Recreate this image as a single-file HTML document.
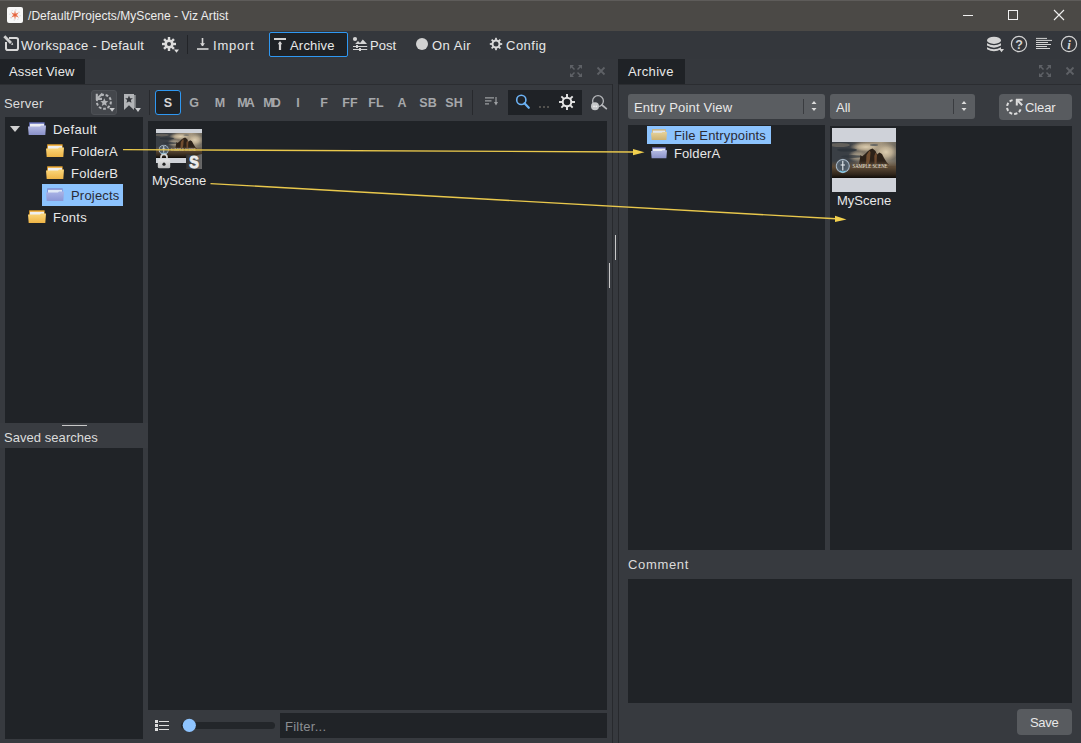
<!DOCTYPE html>
<html><head><meta charset="utf-8">
<style>
*{box-sizing:border-box;margin:0;padding:0}
html,body{width:1081px;height:743px;overflow:hidden;background:#373a3f;font-family:"Liberation Sans",sans-serif;font-size:13px;color:#e8e8e8}
.a{position:absolute}
.t{position:absolute;white-space:nowrap;line-height:13px;font-size:13px}
svg{position:absolute;overflow:visible}
.box{position:absolute;background:#202327}
.ltr{position:absolute;top:97px;font-weight:bold;color:#a6a8ab;font-size:12.5px;text-align:center;width:26px;line-height:13px}
</style></head><body>
<svg width="0" height="0" style="position:absolute">
<defs>
  <linearGradient id="fy" x1="0" y1="0" x2="0" y2="1"><stop offset="0" stop-color="#fbd77c"/><stop offset="1" stop-color="#eeb446"/></linearGradient>
  <linearGradient id="fb" x1="0" y1="0" x2="0" y2="1"><stop offset="0" stop-color="#b6bce4"/><stop offset="1" stop-color="#8990c8"/></linearGradient>
  <linearGradient id="fys" x1="0" y1="0" x2="0" y2="1"><stop offset="0" stop-color="#e6d29a"/><stop offset="1" stop-color="#cdb272"/></linearGradient>
  <linearGradient id="fbs" x1="0" y1="0" x2="0" y2="1"><stop offset="0" stop-color="#aab4e6"/><stop offset="1" stop-color="#8a96d6"/></linearGradient>
  <symbol id="folderY" viewBox="0 0 18 13">
    <path d="M1.2 0.3 H16.6 V6 H1.2 Z" fill="#f0a92e"/>
    <rect x="2" y="1.8" width="14" height="3.2" fill="#efefef"/>
    <path d="M0 4.4 H12 L13 3.6 H18 L17.3 13 H0.7 Z" fill="url(#fy)"/>
  </symbol>
  <symbol id="folderB" viewBox="0 0 18 13">
    <path d="M1.2 0.3 H16.6 V6 H1.2 Z" fill="#6c76c2"/>
    <rect x="2" y="1.8" width="14" height="3.2" fill="#eceef4"/>
    <path d="M0 4.4 H12 L13 3.6 H18 L17.3 13 H0.7 Z" fill="url(#fb)"/>
  </symbol>
  <symbol id="folderYs" viewBox="0 0 18 13">
    <path d="M1.2 0.3 H16.6 V6 H1.2 Z" fill="#d4b06a"/>
    <rect x="2" y="1.8" width="14" height="3.2" fill="#dfe6ee"/>
    <path d="M0 4.4 H12 L13 3.6 H18 L17.3 13 H0.7 Z" fill="url(#fys)"/>
  </symbol>
  <symbol id="folderBs" viewBox="0 0 18 13">
    <path d="M1.2 0.3 H16.6 V6 H1.2 Z" fill="#7d8ad0"/>
    <rect x="2" y="1.8" width="14" height="3.2" fill="#dfe8f6"/>
    <path d="M0 4.4 H12 L13 3.6 H18 L17.3 13 H0.7 Z" fill="url(#fbs)"/>
  </symbol>
  <linearGradient id="skyH" x1="0" y1="0" x2="1" y2="0">
    <stop offset="0" stop-color="#3e4248" stop-opacity="0"/><stop offset="0.3" stop-color="#7a7164"/><stop offset="0.7" stop-color="#a4967f"/><stop offset="1" stop-color="#6f6a60"/>
  </linearGradient>
  <linearGradient id="fg" x1="0" y1="0" x2="0" y2="1">
    <stop offset="0" stop-color="#6b5843" stop-opacity="0"/><stop offset="0.35" stop-color="#5e4b36"/><stop offset="0.8" stop-color="#2e241a"/><stop offset="1" stop-color="#0e0b08"/>
  </linearGradient>
  <radialGradient id="cl1" cx="0.5" cy="0.5" r="0.5"><stop offset="0" stop-color="#dccdb0"/><stop offset="0.5" stop-color="#c8b89b" stop-opacity="0.8"/><stop offset="1" stop-color="#b3a48b" stop-opacity="0"/></radialGradient>
  <radialGradient id="logo" cx="0.5" cy="0.5" r="0.5"><stop offset="0" stop-color="#3f4a55"/><stop offset="0.75" stop-color="#53606c"/><stop offset="0.9" stop-color="#a9b8c6"/><stop offset="1" stop-color="#6d7c8a"/></radialGradient>
  <symbol id="scene" viewBox="0 0 64 36" preserveAspectRatio="none">
    <rect width="64" height="36" fill="#3a3f45"/>
    <rect x="14" width="50" height="24" fill="url(#skyH)"/>
    <ellipse cx="34" cy="5" rx="16" ry="5" fill="url(#cl1)"/>
    <ellipse cx="54" cy="10" rx="12" ry="9" fill="url(#cl1)"/>
    <ellipse cx="25" cy="14" rx="9" ry="6" fill="url(#cl1)" opacity="0.6"/>
    <ellipse cx="8" cy="3" rx="10" ry="2" fill="#8a8070" opacity="0.5"/>
    <ellipse cx="15" cy="8" rx="10" ry="1.6" fill="#2a3038" opacity="0.7"/>
    <ellipse cx="20" cy="14.5" rx="11" ry="1.4" fill="#2e343c" opacity="0.7"/>
    <ellipse cx="42" cy="3" rx="4" ry="1" fill="#3a4450" opacity="0.6"/>
    <path d="M27 22 L28.5 13 L30 14.5 L33 12 L35.5 9.5 L38 7.5 L40.5 6.5 L43.5 9 L45 12.5 L47.5 10.4 L50 12 L52 16 L54.5 20 L57 23 H27 Z" fill="#2c2118"/>
    <path d="M34.5 13 L37.5 8.5 L38.5 10 L38 17 L37 22 L34 22 Z" fill="#8a5d38" opacity="0.75"/>
    <path d="M43.5 10.5 L45 13 L44.5 22 L42.5 22 L42.3 14 Z" fill="#90603a" opacity="0.65"/>
    <rect y="19" width="64" height="17" fill="url(#fg)"/>
    <circle cx="10.8" cy="24" r="7.2" fill="url(#logo)"/>
    <path d="M10.8 18.7 V28.5 M8.6 23 H13" stroke="#e8eef2" stroke-width="1.1"/>
    <path d="M8 29 Q10.8 31 13.6 29" stroke="#7fd0f0" stroke-width="1.2" fill="none"/>
    <text x="20.5" y="26.3" font-family="Liberation Serif" font-size="5.2" fill="#ece6dc" textLength="35" lengthAdjust="spacingAndGlyphs">SAMPLE SCENE</text>
  </symbol>
</defs></svg>
<!-- ===== TITLE BAR ===== -->
<div class="a" style="left:0;top:0;width:1081px;height:31px;background:#4b4946;border-top:1px solid #5e5c5a"></div>
<div class="a" style="left:7px;top:7px;width:16px;height:16px;background:#f7f7f7;border-radius:2px"></div>
<svg style="left:7px;top:7px" width="16" height="16" viewBox="0 0 16 16">
  <circle cx="8" cy="8" r="5.2" fill="none" stroke="#c8ccd2" stroke-width="0.7" stroke-dasharray="1.5 2.5"/>
  <g fill="#e5643c">
    <path d="M8 3 L8.9 8 L8 13 L7.1 8Z"/>
    <path d="M8 3 L8.9 8 L8 13 L7.1 8Z" transform="rotate(55 8 8)"/>
    <path d="M8 3 L8.9 8 L8 13 L7.1 8Z" transform="rotate(-55 8 8)"/>
    <path d="M8 4.2 L8.7 8 L8 11.8 L7.3 8Z" transform="rotate(90 8 8)" opacity="0.7"/>
  </g>
</svg>
<div class="t" style="left:28px;top:10px;font-size:12px;line-height:12px;color:#ededed;letter-spacing:0.05px">/Default/Projects/MyScene - Viz Artist</div>
<svg style="left:0;top:0" width="1081" height="31">
  <line x1="963" y1="15.5" x2="973" y2="15.5" stroke="#f0f0f0" stroke-width="1"/>
  <rect x="1008.5" y="10.5" width="9" height="9" fill="none" stroke="#f0f0f0" stroke-width="1"/>
  <path d="M1054 10 L1064 20 M1064 10 L1054 20" stroke="#f0f0f0" stroke-width="1.1"/>
</svg>

<!-- ===== TOOLBAR ===== -->
<div class="a" style="left:0;top:31px;width:1081px;height:28px;background:#34373c"></div>
<!-- workspace icon -->
<svg style="left:0;top:31px" width="30" height="28" viewBox="0 0 30 28">
  <path d="M9 7 H16.2 Q18 7 18 8.8 V17.2 Q18 19 16.2 19 H7.8 Q6 19 6 17.2 V11" fill="none" stroke="#d8d8d8" stroke-width="2"/>
  <path d="M3.3 6.2 L5.3 4.2 L12 10.9 L10 12.9 Z" fill="#d0d0d0"/>
  <path d="M10.8 13.4 L12.6 11.6 L13.2 14 Z" fill="#d0d0d0"/>
</svg>
<div class="t" style="left:21px;top:39px;letter-spacing:0.3px">Workspace - Default</div>
<!-- gear w/ dropdown -->
<svg style="left:158px;top:34px" width="26" height="22" viewBox="0 0 26 22">
  <g transform="translate(11,10)" fill="#dcdcdc">
    <circle r="4.6"/>
    <g id="teeth"><rect x="-1.2" y="-7" width="2.4" height="14"/><rect x="-7" y="-1.2" width="14" height="2.4"/>
    <rect x="-1.2" y="-7" width="2.4" height="14" transform="rotate(45)"/><rect x="-7" y="-1.2" width="14" height="2.4" transform="rotate(45)"/></g>
  </g>
  <circle cx="11" cy="10" r="2" fill="#34373c"/>
  <path d="M16 15.4 H21 L18.5 18.8 Z" fill="#dcdcdc"/>
</svg>
<div class="a" style="left:187px;top:35px;width:1px;height:19px;background:#222428"></div>
<!-- import icon -->
<svg style="left:195px;top:36px" width="16" height="16" viewBox="0 0 16 16">
  <path d="M7.5 2 V10" stroke="#d8d8d8" stroke-width="1.6"/>
  <path d="M5 7.3 L7.5 10.3 L10 7.3 Z" fill="#d8d8d8"/>
  <path d="M2 13 H13.5" stroke="#d8d8d8" stroke-width="1.6"/>
</svg>
<div class="t" style="left:213px;top:39px;letter-spacing:0.8px">Import</div>
<!-- archive button -->
<div class="a" style="left:269px;top:32px;width:79px;height:25px;border:1.5px solid #2f98f2;border-radius:2px;background:#1e2125"></div>
<svg style="left:270px;top:32px" width="20" height="24" viewBox="0 0 20 24">
  <path d="M4 7 H16" stroke="#d2d2d2" stroke-width="2"/>
  <path d="M10 10.5 V18" stroke="#d2d2d2" stroke-width="2.2"/>
  <path d="M7.8 12.3 L10 9 L12.2 12.3 Z" fill="#d2d2d2"/>
</svg>
<div class="t" style="left:290px;top:39px;letter-spacing:0.2px">Archive</div>
<!-- post icon -->
<svg style="left:350px;top:34px" width="20" height="20" viewBox="0 0 20 20">
  <circle cx="5" cy="5" r="2.1" fill="#d4d4d4"/>
  <path d="M5.2 10 L8 7 L10 9 L12.8 5.6 L17 10 Z" fill="#d4d4d4"/>
  <path d="M3 12.5 H17.2 M3 15.5 H17.2" stroke="#d4d4d4" stroke-width="1.2"/>
  <rect x="6" y="11" width="2" height="3" fill="#d4d4d4"/>
  <rect x="9" y="14" width="2" height="3" fill="#d4d4d4"/>
</svg>
<div class="t" style="left:370px;top:39px;letter-spacing:0px">Post</div>
<!-- on air -->
<div class="a" style="left:416px;top:38px;width:12px;height:12px;border-radius:50%;background:#d2d2d2"></div>
<div class="t" style="left:432px;top:39px;letter-spacing:0.5px">On Air</div>
<!-- config gear -->
<svg style="left:484px;top:32px" width="24" height="24" viewBox="0 0 24 24">
  <g transform="translate(12,12)" fill="#d8d8d8">
    <circle r="3.5" fill="none" stroke="#d8d8d8" stroke-width="2"/>
    <rect x="-0.9" y="-6.2" width="1.8" height="2.6"/><rect x="-0.9" y="3.6" width="1.8" height="2.6"/><rect x="-6.2" y="-0.9" width="2.6" height="1.8"/><rect x="3.6" y="-0.9" width="2.6" height="1.8"/>
    <g transform="rotate(45)"><rect x="-0.9" y="-6.2" width="1.8" height="2.6"/><rect x="-0.9" y="3.6" width="1.8" height="2.6"/><rect x="-6.2" y="-0.9" width="2.6" height="1.8"/><rect x="3.6" y="-0.9" width="2.6" height="1.8"/></g>
  </g>
</svg>
<div class="t" style="left:506px;top:39px;letter-spacing:0.5px">Config</div>
<!-- right toolbar icons -->
<svg style="left:980px;top:32px" width="101" height="26" viewBox="0 0 101 26">
  <g fill="#d4d4d4">
    <ellipse cx="14" cy="8.3" rx="7" ry="3.6"/>
    <path d="M7 11.2 Q14 15.4 21 11.2 V13.6 Q14 17.8 7 13.6 Z"/>
    <path d="M7 15.2 Q14 19.4 21 15.2 V17.2 Q14 21.4 7 17.2 Z"/>
    <path d="M19 17 H24 L21.5 20.3 Z"/>
  </g>
  <circle cx="39" cy="12" r="7.6" fill="none" stroke="#d4d4d4" stroke-width="1.2"/>
  <text x="39" y="16.5" font-family="Liberation Sans" font-weight="bold" font-size="12.5" fill="#d4d4d4" text-anchor="middle">?</text>
  <g stroke="#d4d4d4" stroke-width="1">
    <path d="M56 6.4 H67 M56 8.4 H72 M56 10.5 H68 M56 12.5 H71 M56 14.5 H67 M56 16.5 H70"/>
  </g>
  <circle cx="89" cy="12" r="7.6" fill="none" stroke="#d4d4d4" stroke-width="1.2"/>
  <text x="89" y="16.8" font-family="Liberation Serif" font-style="italic" font-weight="bold" font-size="13" fill="#d4d4d4" text-anchor="middle">i</text>
</svg>

<!-- ===== LEFT DOCK ===== -->
<div class="a" style="left:0;top:59px;width:1081px;height:25px;background:#35383d"></div>
<div class="a" style="left:0;top:59px;width:85px;height:25px;background:#1f2226"></div>
<div class="t" style="left:9px;top:65px;letter-spacing:0.15px">Asset View</div>
<svg style="left:566px;top:62px" width="44" height="20" viewBox="0 0 44 20">
  <g stroke="#5e6166" stroke-width="1.5" fill="none">
    <path d="M4.5 3.5 L8.5 7.5 M15.5 3.5 L11.5 7.5 M4.5 14.5 L8.5 10.5 M15.5 14.5 L11.5 10.5"/>
  </g>
  <g fill="#5e6166">
    <path d="M4 3 H8 L4 7Z M16 3 H12 L16 7Z M4 15 H8 L4 11Z M16 15 H12 L16 11Z"/>
  </g>
  <path d="M31.5 5.5 L38.5 12.5 M38.5 5.5 L31.5 12.5" stroke="#5e6166" stroke-width="1.8"/>
</svg>
<div class="a" style="left:0;top:84px;width:612px;height:1px;background:#2b2d31"></div>
<div class="t" style="left:4px;top:97px;color:#dcdcdc;letter-spacing:0.2px">Server</div>
<div class="a" style="left:91px;top:90px;width:26px;height:25px;background:#44474c;border:1px solid #4d5055;border-radius:3px"></div>
<svg style="left:91px;top:90px" width="56" height="26" viewBox="0 0 56 26">
  <path d="M10.2 5.3 A7 7 0 1 1 6.1 10" fill="none" stroke="#b3b5b8" stroke-width="2" stroke-dasharray="2.8 1.7"/>
  <path d="M13.3 8.3 L14.5 11 L17.3 11.2 L15.1 13.1 L15.8 15.9 L13.3 14.4 L10.8 15.9 L11.5 13.1 L9.3 11.2 L12.1 11 Z" fill="#b3b5b8"/>
  <path d="M5.8 3.8 V8.9 H11" fill="none" stroke="#b3b5b8" stroke-width="2.1"/>
  <path d="M6.5 8.2 L11.5 3.6" stroke="#b3b5b8" stroke-width="2"/>
  <path d="M18.3 17.9 H23.9 L21.1 21.8 Z" fill="#c8cacc"/>
  <path d="M33 4 H43 V20 L38 15.3 L33 20 Z" fill="#b3b5b8"/>
  <path d="M43.9 5 V18" stroke="#b3b5b8" stroke-width="1.2"/>
  <path d="M38 5.6 L39.1 8.2 L41.9 8.3 L39.8 10.1 L40.5 12.8 L38 11.4 L35.5 12.8 L36.2 10.1 L34.1 8.3 L36.9 8.2 Z" fill="#35383d"/>
  <path d="M44.1 18 H49.9 L47 22 Z" fill="#c8cacc"/>
</svg>
<div class="a" style="left:149px;top:90px;width:1px;height:25px;background:#27292d"></div>
<div class="a" style="left:155px;top:90px;width:26px;height:25px;border:1.5px solid #2f98f2;border-radius:3px;background:#1f2226"></div>
<div class="ltr" style="left:155px;color:#d6d6d6">S</div>
<div class="ltr" style="left:181px">G</div>
<div class="ltr" style="left:207px">M</div>
<div class="ltr" style="left:232px;letter-spacing:-1.9px">MA</div>
<div class="ltr" style="left:258px;letter-spacing:-1.9px">MD</div>
<div class="ltr" style="left:285px">I</div>
<div class="ltr" style="left:311px">F</div>
<div class="ltr" style="left:337px">FF</div>
<div class="ltr" style="left:363px">FL</div>
<div class="ltr" style="left:389px">A</div>
<div class="ltr" style="left:415px">SB</div>
<div class="ltr" style="left:441px">SH</div>
<div class="a" style="left:472px;top:90px;width:1px;height:25px;background:#27292d"></div>
<svg style="left:480px;top:90px" width="130" height="26" viewBox="0 0 130 26">
  <g stroke="#9c9ea1" stroke-width="1.2"><path d="M5 7.8 H14 M5 10.8 H11.5 M5 13.8 H9"/></g>
  <path d="M16 7 V14" stroke="#9c9ea1" stroke-width="1.2"/><path d="M14 12 L16 15.5 L18 12Z" fill="#9c9ea1"/>
</svg>
<div class="a" style="left:508px;top:90px;width:74px;height:25px;background:#1f2226"></div>
<svg style="left:508px;top:90px" width="110" height="26" viewBox="0 0 110 26">
  <circle cx="13.3" cy="9.9" r="4.6" fill="none" stroke="#6cb2f4" stroke-width="1.6"/>
  <path d="M16.5 13.2 L20.8 17.8" stroke="#6cb2f4" stroke-width="2.2" stroke-linecap="round"/>
  <g fill="#8a8478"><rect x="31.3" y="16.3" width="1.4" height="1.4"/><rect x="35.3" y="16.3" width="1.4" height="1.4"/><rect x="39.3" y="16.3" width="1.4" height="1.4"/></g>
  <g transform="translate(59,12)" fill="#e6e6e6">
    <circle r="4.3" fill="none" stroke="#e6e6e6" stroke-width="2"/>
    <g id="gt"><rect x="-0.95" y="-8" width="1.9" height="3.6"/><rect x="-0.95" y="4.4" width="1.9" height="3.6"/><rect x="-8" y="-0.95" width="3.6" height="1.9"/><rect x="4.4" y="-0.95" width="3.6" height="1.9"/></g>
    <g transform="rotate(45)"><rect x="-0.95" y="-8" width="1.9" height="3.6"/><rect x="-0.95" y="4.4" width="1.9" height="3.6"/><rect x="-8" y="-0.95" width="3.6" height="1.9"/><rect x="4.4" y="-0.95" width="3.6" height="1.9"/></g>
  </g>
  <circle cx="90" cy="11.1" r="5.4" fill="none" stroke="#b4b6b9" stroke-width="1.3"/>
  <path d="M94 15 L98.3 18.6" stroke="#b4b6b9" stroke-width="1.8" stroke-linecap="round"/>
  <circle cx="87" cy="16.2" r="4" fill="#c4c6c8"/>
  <circle cx="86" cy="16.3" r="0.9" fill="#eeeeee"/><circle cx="88.3" cy="16.3" r="0.9" fill="#eeeeee"/>
</svg>

<!-- server tree -->
<div class="box" style="left:5px;top:117px;width:138px;height:306px"></div>
<svg style="left:10px;top:126px" width="10" height="6"><path d="M0 0 H10 L5 6Z" fill="#d0d0d0"/></svg>
<svg style="left:28px;top:122px" width="18" height="13"><use href="#folderB"/></svg>
<svg style="left:46px;top:144px" width="18" height="13"><use href="#folderY"/></svg>
<svg style="left:46px;top:166px" width="18" height="13"><use href="#folderY"/></svg>
<svg style="left:28px;top:210px" width="18" height="13"><use href="#folderY"/></svg>

<div class="t" style="left:53px;top:123px;letter-spacing:0.4px">Default</div>
<div class="t" style="left:71px;top:145px;letter-spacing:0.2px">FolderA</div>
<div class="t" style="left:71px;top:167px;letter-spacing:0.25px">FolderB</div>
<div class="a" style="left:42px;top:184px;width:81px;height:22px;background:#8cc3fe"></div>
<svg style="left:46px;top:188px" width="18" height="13"><use href="#folderBs"/></svg>
<div class="t" style="left:71px;top:189px;color:#2a2a35;letter-spacing:0.2px">Projects</div>
<div class="t" style="left:53px;top:211px;letter-spacing:0.3px">Fonts</div>

<div class="a" style="left:0;top:423px;width:148px;height:25px;background:#393c41"></div>
<div class="a" style="left:62px;top:425px;width:25px;height:1px;background:#c8c8c8"></div>
<div class="t" style="left:4px;top:431px;color:#dcdcdc;letter-spacing:0.05px">Saved searches</div>
<div class="box" style="left:5px;top:448px;width:138px;height:291px"></div>

<!-- scene list -->
<div class="box" style="left:148px;top:121px;width:459px;height:589px"></div>
<div class="a" style="left:156px;top:129px;width:46px;height:34px;background:#cfd2d8"></div>
<svg style="left:156px;top:133px" width="46" height="25"><use href="#scene" width="46" height="25"/></svg>
<svg style="left:156px;top:152px" width="16" height="18" viewBox="0 0 16 18">
  <defs><linearGradient id="lk" x1="0" y1="0" x2="0" y2="1"><stop offset="0" stop-color="#e4e4e4"/><stop offset="1" stop-color="#bcbcbc"/></linearGradient></defs>
  <path d="M5 8 V5.2 Q5 2.3 8 2.3 Q11 2.3 11 5.2 V8" fill="none" stroke="#d6d6d6" stroke-width="1.7"/>
  <rect x="1.8" y="7.5" width="12.4" height="8.8" rx="1.6" fill="url(#lk)"/>
  <circle cx="8" cy="12.2" r="1.6" fill="#222"/>
</svg>
<svg style="left:186px;top:153px" width="16" height="16" viewBox="0 0 16 16">
  <defs><linearGradient id="sb" x1="0" y1="0" x2="1" y2="0"><stop offset="0" stop-color="#2e2e2e"/><stop offset="1" stop-color="#6a6a6a"/></linearGradient></defs>
  <path d="M0 1 L8 2.8 L16 1 V16 H0 Z" fill="url(#sb)"/>
  <text x="8" y="14.7" font-family="Liberation Sans" font-weight="bold" font-size="16" fill="#ececec" stroke="#ececec" stroke-width="0.9" text-anchor="middle" transform="translate(8 0) scale(0.9 1) translate(-8 0)">S</text>
</svg>
<div class="t" style="left:152px;top:174px;letter-spacing:0px">MyScene</div>

<!-- bottom -->
<svg style="left:150px;top:713px" width="130" height="26" viewBox="0 0 130 26">
  <g fill="#dedede"><rect x="5" y="7" width="3" height="3"/><rect x="5" y="11" width="3" height="3"/><rect x="5" y="15" width="3" height="3"/></g>
  <g stroke="#dedede" stroke-width="1"><path d="M9 8.5 H19 M9 12.5 H19 M9 16.5 H19"/></g>
  <rect x="31" y="9" width="94" height="7" rx="3.5" fill="#23262a"/>
  <circle cx="39.3" cy="12.3" r="6.6" fill="#8ec4ff"/>
</svg>
<div class="box" style="left:280px;top:713px;width:327px;height:25px"></div>
<div class="t" style="left:285px;top:720px;color:#8b8e92;letter-spacing:0.25px">Filter...</div>

<!-- splitter -->
<div class="a" style="left:612px;top:84px;width:1px;height:659px;background:#27292d"></div>
<div class="a" style="left:613px;top:84px;width:5px;height:659px;background:#36393e"></div>
<div class="a" style="left:618px;top:84px;width:1px;height:659px;background:#27292d"></div>
<div class="a" style="left:615px;top:235px;width:1px;height:25px;background:#c8c8c8"></div>
<div class="a" style="left:609px;top:263px;width:1px;height:25px;background:#c8c8c8"></div>

<!-- ===== RIGHT DOCK ===== -->
<div class="a" style="left:619px;top:59px;width:462px;height:25px;background:#35383d"></div>
<div class="a" style="left:618px;top:59px;width:67px;height:25px;background:#1f2226"></div>
<div class="t" style="left:628px;top:65px;letter-spacing:0.35px">Archive</div>
<svg style="left:1035px;top:62px" width="44" height="20" viewBox="0 0 44 20">
  <g stroke="#5e6166" stroke-width="1.5" fill="none">
    <path d="M4.5 3.5 L8.5 7.5 M15.5 3.5 L11.5 7.5 M4.5 14.5 L8.5 10.5 M15.5 14.5 L11.5 10.5"/>
  </g>
  <g fill="#5e6166"><path d="M4 3 H8 L4 7Z M16 3 H12 L16 7Z M4 15 H8 L4 11Z M16 15 H12 L16 11Z"/></g>
  <path d="M31.5 5.5 L38.5 12.5 M38.5 5.5 L31.5 12.5" stroke="#5e6166" stroke-width="1.8"/>
</svg>
<div class="a" style="left:619px;top:84px;width:462px;height:1px;background:#2b2d31"></div>
<div class="a" style="left:628px;top:94px;width:197px;height:25px;background:#5a5d61;border-radius:3px"></div>
<div class="t" style="left:634px;top:101px;letter-spacing:0.2px">Entry Point View</div>
<div class="a" style="left:803px;top:99px;width:1px;height:15px;background:#3a3c40"></div>
<svg style="left:809px;top:98px" width="12" height="16"><path d="M2.5 6 L5 3 L7.5 6Z M2.5 10 L5 13 L7.5 10Z" fill="#dcdcdc"/></svg>
<div class="a" style="left:830px;top:94px;width:145px;height:25px;background:#5a5d61;border-radius:3px"></div>
<div class="t" style="left:836px;top:101px">All</div>
<div class="a" style="left:953px;top:99px;width:1px;height:15px;background:#3a3c40"></div>
<svg style="left:959px;top:98px" width="12" height="16"><path d="M2.5 6 L5 3 L7.5 6Z M2.5 10 L5 13 L7.5 10Z" fill="#dcdcdc"/></svg>
<div class="a" style="left:999px;top:94px;width:73px;height:26px;background:#585b5f;border-radius:4px"></div>
<svg style="left:1003px;top:96px" width="22" height="22" viewBox="0 0 22 22">
  <path d="M17.6 13.4 A7 7 0 1 1 9.8 4.1" fill="none" stroke="#dcdcdc" stroke-width="2" stroke-dasharray="3.2 1.9"/>
  <path d="M13 3.8 H19.5 M13.8 3 V9.5" fill="none" stroke="#dcdcdc" stroke-width="2"/>
  <path d="M14.3 4.3 L19.2 9.3" stroke="#dcdcdc" stroke-width="2.1"/>
</svg>
<div class="t" style="left:1025px;top:101px;letter-spacing:-0.1px">Clear</div>

<div class="box" style="left:628px;top:125px;width:197px;height:425px"></div>
<div class="a" style="left:647px;top:126px;width:124px;height:18px;background:#8cc3fe"></div>
<svg style="left:651px;top:129px" width="16" height="11" viewBox="0 0 18 13" preserveAspectRatio="none"><use href="#folderYs"/></svg>
<div class="t" style="left:674px;top:129px;color:#2a2a35;letter-spacing:0.15px">File Entrypoints</div>
<svg style="left:651px;top:147px" width="16" height="11.5" viewBox="0 0 18 13" preserveAspectRatio="none"><use href="#folderB"/></svg>
<div class="t" style="left:674px;top:147px;letter-spacing:0.1px">FolderA</div>

<div class="box" style="left:830px;top:126px;width:242px;height:424px"></div>
<div class="a" style="left:832px;top:128px;width:64px;height:64px;background:#cfd2d9"></div>
<svg style="left:832px;top:142px" width="64" height="36"><use href="#scene" width="64" height="36"/></svg>
<div class="t" style="left:837px;top:194px;letter-spacing:0px">MyScene</div>

<div class="t" style="left:628px;top:558px;color:#dcdcdc;letter-spacing:0.65px">Comment</div>
<div class="box" style="left:628px;top:579px;width:444px;height:124px"></div>
<div class="a" style="left:1017px;top:709px;width:55px;height:26px;background:#585b5f;border-radius:4px"></div>
<div class="t" style="left:1030px;top:716px;letter-spacing:-0.3px">Save</div>

<!-- ARROWS overlay -->
<svg style="left:0;top:0" width="1081" height="743">
  <line x1="123" y1="149.6" x2="634" y2="152" stroke="#e9c84c" stroke-width="1.4"/>
  <path d="M633 149 L644.5 152.3 L633 155.3 Z" fill="#f2d04e"/>
  <line x1="210.5" y1="183.6" x2="836" y2="218.8" stroke="#e9c84c" stroke-width="1.4"/>
  <path d="M835 215.8 L846.5 219.4 L835 222 Z" fill="#f2d04e"/>
</svg>
</body></html>
